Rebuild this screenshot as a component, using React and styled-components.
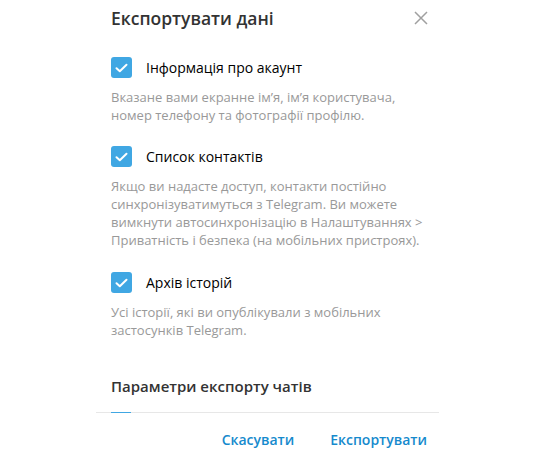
import React from "react";
import styled, { createGlobalStyle } from "styled-components";

const GlobalStyle = createGlobalStyle`
  html, body {
    margin: 0;
    background: #fff;
  }
  body {
    font-family: "Open Sans", "Noto Sans", sans-serif;
  }
`;

const Dialog = styled.div`
  width: 343px;
  margin-left: 96px;
  background: #fff;
`;

const Header = styled.div`
  display: flex;
  align-items: center;
  justify-content: space-between;
  padding: 5px 11px 0 15px;
  height: 26px;
`;

const Title = styled.div`
  font-size: 17.5px;
  font-weight: 600;
  color: #333;
  line-height: 26px;
`;

const Close = styled.button`
  width: 14px;
  height: 14px;
  padding: 0;
  border: 0;
  background: transparent;
  display: flex;
  cursor: pointer;
`;

const Body = styled.div`
  padding: 0 15px;
`;

const Option = styled.div`
  margin-top: ${(p) => p.$gap}px;
`;

const Row = styled.label`
  display: flex;
  align-items: center;
  height: 21px;
  cursor: pointer;
`;

const Box = styled.span`
  width: 21px;
  height: 21px;
  border-radius: 3px;
  background: #40a7e3;
  display: flex;
  align-items: center;
  justify-content: center;
  flex-shrink: 0;
`;

const Label = styled.span`
  margin-left: 14px;
  font-size: 14px;
  color: #000;
`;

const Desc = styled.p`
  margin: 10px 0 0;
  font-size: 13px;
  line-height: 18px;
  color: #999;
`;

const Section = styled.div`
  margin-top: 36px;
  font-size: 15px;
  font-weight: 600;
  line-height: 22px;
  color: #333;
`;

const Separator = styled.div`
  display: flex;
  height: 1px;
  margin-top: 15px;
  padding-left: 15px;
  background: #e7e7e7;
`;

const Peek = styled.span`
  width: 20px;
  background: #40a7e3;
`;

const Footer = styled.div`
  display: flex;
  justify-content: flex-end;
  gap: 36px;
  padding: 17px 12px 0 0;
`;

const Action = styled.button`
  padding: 0;
  border: 0;
  background: transparent;
  font-family: inherit;
  font-size: 14px;
  font-weight: 600;
  line-height: 20px;
  color: #168acd;
  cursor: pointer;
`;

const Check = () => (
  <svg width="13" height="10" viewBox="0 0 13 10">
    <path d="M1.5 5.2 L4.8 8.2 L11.5 1.8" fill="none" stroke="#fff" strokeWidth="2" strokeLinecap="round" strokeLinejoin="round" />
  </svg>
);

const options = [
  {
    gap: 26,
    label: "Інформація про акаунт",
    desc: "Вказане вами екранне ім’я, ім’я користувача, номер телефону та фотографії профілю.",
  },
  {
    gap: 22,
    label: "Список контактів",
    desc: "Якщо ви надасте доступ, контакти постійно синхронізуватимуться з Telegram. Ви можете вимкнути автосинхронізацію в Налаштуваннях > Приватність і безпека (на мобільних пристроях).",
  },
  {
    gap: 23,
    label: "Архів історій",
    desc: "Усі історії, які ви опублікували з мобільних застосунків Telegram.",
  },
];

export default function App() {
  return (
    <>
      <GlobalStyle />
      <Dialog>
        <Header>
          <Title>Експортувати дані</Title>
          <Close aria-label="Закрити">
            <svg width="14" height="14" viewBox="0 0 14 14">
              <path d="M1 1 L13 13 M13 1 L1 13" stroke="#a0a0a0" strokeWidth="1.5" />
            </svg>
          </Close>
        </Header>
        <Body>
          {options.map((o) => (
            <Option key={o.label} $gap={o.gap}>
              <Row>
                <Box>
                  <Check />
                </Box>
                <Label>{o.label}</Label>
              </Row>
              <Desc>{o.desc}</Desc>
            </Option>
          ))}
          <Section>Параметри експорту чатів</Section>
        </Body>
        <Separator>
          <Peek />
        </Separator>
        <Footer>
          <Action>Скасувати</Action>
          <Action>Експортувати</Action>
        </Footer>
      </Dialog>
    </>
  );
}
